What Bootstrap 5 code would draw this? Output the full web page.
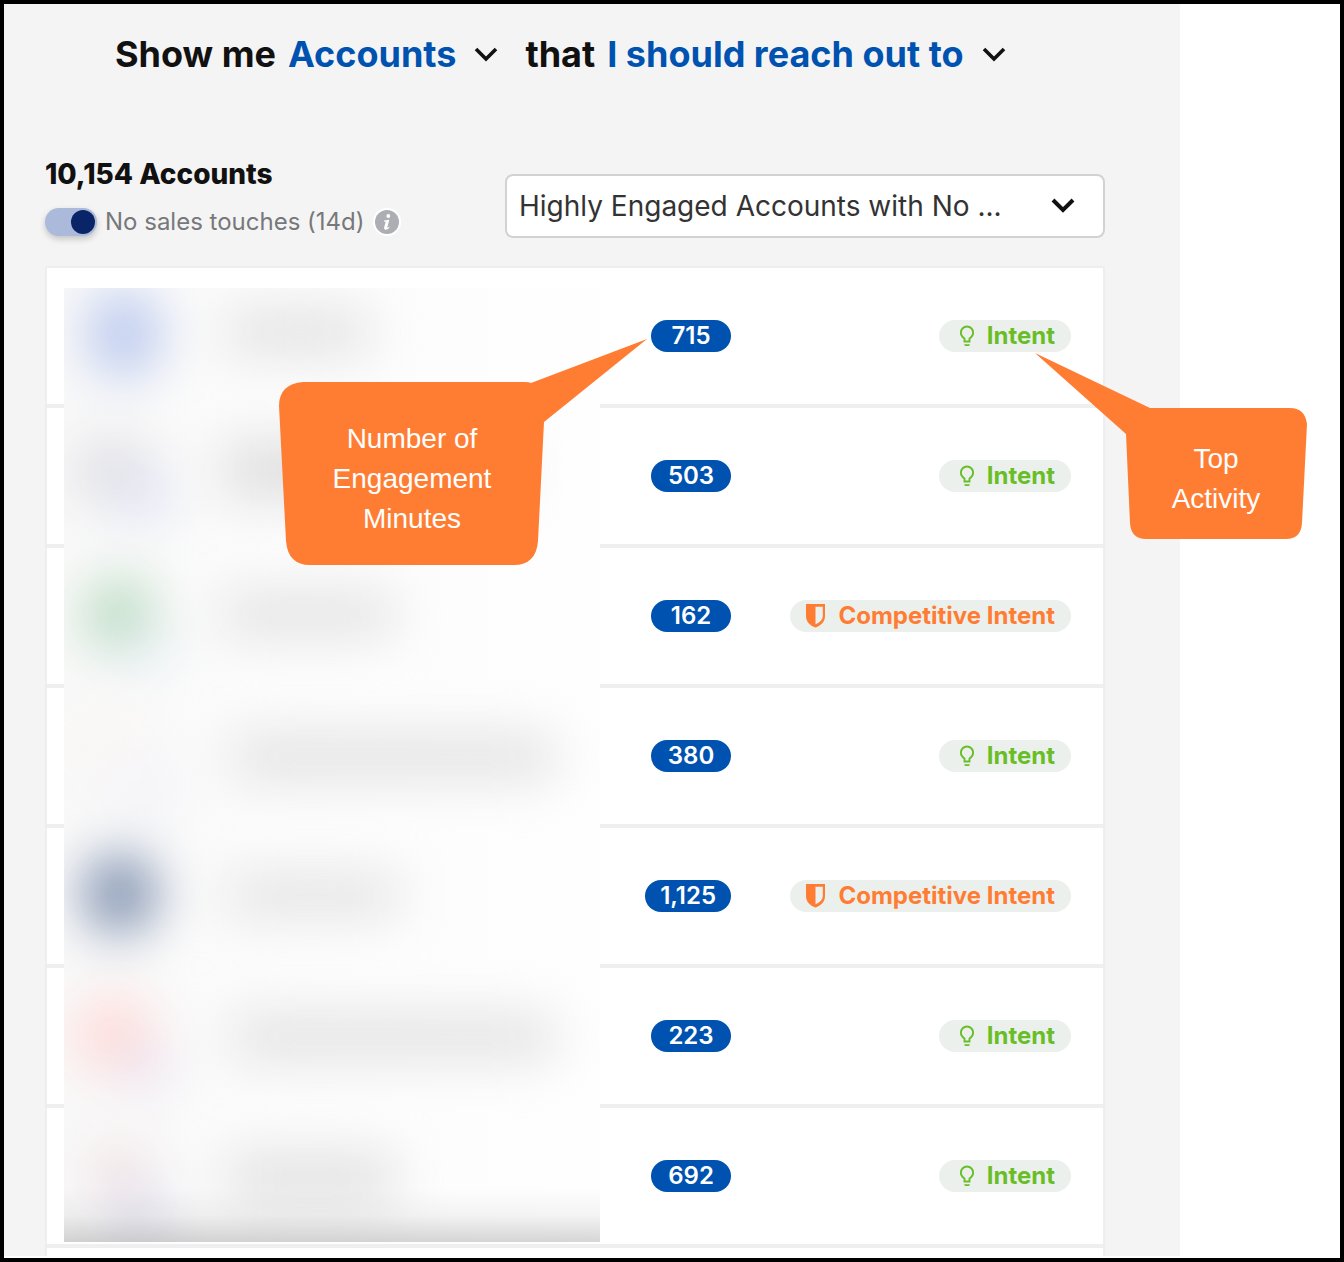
<!DOCTYPE html>
<html lang="en">
<head>
<meta charset="utf-8">
<meta name="viewport" content="width=device-width, initial-scale=1">
<title>Accounts</title>
<link href="https://cdn.jsdelivr.net/npm/bootstrap@5.3.0/dist/css/bootstrap.min.css" rel="stylesheet">
<style>
body { font-family: Inter, "Liberation Sans", sans-serif; background: #fff; color: #111; }
.frame { border: 4px solid #000; min-height: 100vh; padding: 0 160px 2px 0; }
.panel { background: #f4f4f4; padding: 24px 75px 0 41px; }
.query { font-size: 36px; line-height: 52px; font-weight: 700; padding-left: 70px; margin-bottom: 74px; }
.pick { background: none; border: 0; padding: 0; color: #0052b0; font-weight: 700; line-height: 52px; gap: 18px; margin: 0 27px 0 12px; }
.total { font-size: 28px; line-height: 40px; font-weight: 800; margin-bottom: 14px; }
.switch-input.form-check-input { width: 52px; height: 28px; margin: 0; border: 0; box-shadow: 0 3px 6px rgba(0,0,0,.2); background-color: #abb9da; background-size: 28px;
  background-image: url("data:image/svg+xml,%3Csvg xmlns='http://www.w3.org/2000/svg' viewBox='0 0 28 28'%3E%3Ccircle cx='14' cy='14' r='12' fill='%230a2567'/%3E%3C/svg%3E"); }
.tools-left { padding-bottom: 2px; }
.switch-label { font-size: 24px; line-height: 28px; color: #77787b; }
.segment.form-select { width: 600px; height: 64px; font-size: 28px; line-height: 40px; padding: 10px 64px 10px 12px; border: 2px solid #d2d2d2; border-radius: 8px; color: #333; background-position: right 26px center; background-size: 28px;
  background-image: url("data:image/svg+xml,%3Csvg xmlns='http://www.w3.org/2000/svg' viewBox='0 0 28 28'%3E%3Cpath d='M4 8l10 10L24 8' fill='none' stroke='%23111' stroke-width='4'/%3E%3C/svg%3E"); }
.accounts { border: 2px solid #eee; border-bottom: 0; background: #fff; margin-top: 28px; }
.account { height: 140px; border-bottom: 4px solid #efefef; padding-right: 32px; }
.account-next { height: 8px; }
.minutes { min-width: 80px; height: 32px; line-height: 32px; padding: 0 15px; font-size: 24px; font-weight: 600; color: #fff; background: #0052b0; text-align: center; }
.activity { width: 340px; }
.tag { height: 32px; line-height: 32px; padding: 0 16px; font-size: 24px; font-weight: 700; background: #ecf0ed; }
.tag-intent { color: #69be28; gap: 8px; }
.tag-rival { color: #ff7d32; gap: 12px; }
/* private names are hidden behind a heavy blur */
.redacted { left: 17px; top: 20px; width: 536px; height: 954px; background: #fcfcfc; }
.callout-note { color: #fff; font-family: "Liberation Sans", Arial, sans-serif; font-size: 28px; line-height: 40px; text-align: center; }
.note-minutes { left: 275px; top: 335px; width: 368px; padding: 80px 102px 0 0; height: 226px; }
.note-activity { left: 1031px; top: 349px; width: 272px; padding: 86px 0 0 90px; height: 186px; }
.callout-note svg { z-index: -1; }
</style>
</head>
<body>
<svg class="d-none">
  <symbol id="chev" viewBox="0 0 24 24"><path d="M2 7l10 10L22 7" fill="none" stroke="#111" stroke-width="3.6"/></symbol>
  <symbol id="bulb" viewBox="0 0 24 24"><path d="M9.500 17.500v-3C7 13 5.900 11.200 5.900 8.600a6.100 6.100 0 0 1 12.200 0c0 2.600-1.100 4.400-3.600 5.900v3z" fill="none" stroke="currentColor" stroke-width="1.900"/><path d="M9 20.200h6l-1 1.800h-4z" fill="currentColor"/></symbol>
  <symbol id="shield" viewBox="0 0 20 24"><path fill-rule="evenodd" d="M0 0h19v12c0 6-4 9.500-9.500 11.500C4 21.500 0 18 0 12zM9.500 2.800v17.500c4.500-2 7.300-4.500 7.300-8.500v-9z" fill="currentColor"/></symbol>
</svg>
<div class="frame position-relative">
  <main class="panel">
    <div class="query d-flex align-items-center">
      <span>Show me</span>
      <button type="button" class="pick d-flex align-items-center">Accounts <svg width="24" height="24" aria-hidden="true"><use href="#chev"/></svg></button>
      <span>that</span>
      <button type="button" class="pick d-flex align-items-center">I should reach out to <svg width="24" height="24" aria-hidden="true"><use href="#chev"/></svg></button>
    </div>
    <div class="d-flex justify-content-between align-items-end">
      <div class="tools-left">
        <h1 class="total">10,154 Accounts</h1>
        <div class="form-check form-switch d-flex align-items-center gap-2 p-0 m-0">
          <input class="form-check-input switch-input" type="checkbox" role="switch" id="untouched" checked>
          <label class="switch-label" for="untouched">No sales touches (14d)</label>
          <svg width="28" height="28" viewBox="0 0 28 28" aria-hidden="true"><circle cx="14" cy="14" r="14" fill="#fff"/><circle cx="14" cy="14" r="12" fill="#adaeb3"/><circle cx="15.300" cy="8" r="1.900" fill="#fff"/><path d="M11 12.500l5.300-.8-2 7.600q0 1 2-.5l.4.700q-2.500 2.600-4.400 2.300-1.700-.4-1.100-2.500l1.500-5.500-1.700-.3z" fill="#fff"/></svg>
        </div>
      </div>
      <select class="form-select segment" aria-label="Segment"><option>Highly Engaged Accounts with No ...</option></select>
    </div>
    <div class="accounts position-relative">
      <div class="account d-flex align-items-center justify-content-end"><span class="minutes rounded-pill">715</span><div class="activity d-flex justify-content-end"><span class="tag tag-intent rounded-pill d-flex align-items-center"><svg width="24" height="24"><use href="#bulb"/></svg>Intent</span></div></div>
      <div class="account d-flex align-items-center justify-content-end"><span class="minutes rounded-pill">503</span><div class="activity d-flex justify-content-end"><span class="tag tag-intent rounded-pill d-flex align-items-center"><svg width="24" height="24"><use href="#bulb"/></svg>Intent</span></div></div>
      <div class="account d-flex align-items-center justify-content-end"><span class="minutes rounded-pill">162</span><div class="activity d-flex justify-content-end"><span class="tag tag-rival rounded-pill d-flex align-items-center"><svg width="20" height="24"><use href="#shield"/></svg>Competitive Intent</span></div></div>
      <div class="account d-flex align-items-center justify-content-end"><span class="minutes rounded-pill">380</span><div class="activity d-flex justify-content-end"><span class="tag tag-intent rounded-pill d-flex align-items-center"><svg width="24" height="24"><use href="#bulb"/></svg>Intent</span></div></div>
      <div class="account d-flex align-items-center justify-content-end"><span class="minutes rounded-pill">1,125</span><div class="activity d-flex justify-content-end"><span class="tag tag-rival rounded-pill d-flex align-items-center"><svg width="20" height="24"><use href="#shield"/></svg>Competitive Intent</span></div></div>
      <div class="account d-flex align-items-center justify-content-end"><span class="minutes rounded-pill">223</span><div class="activity d-flex justify-content-end"><span class="tag tag-intent rounded-pill d-flex align-items-center"><svg width="24" height="24"><use href="#bulb"/></svg>Intent</span></div></div>
      <div class="account d-flex align-items-center justify-content-end"><span class="minutes rounded-pill">692</span><div class="activity d-flex justify-content-end"><span class="tag tag-intent rounded-pill d-flex align-items-center"><svg width="24" height="24"><use href="#bulb"/></svg>Intent</span></div></div>
      <div class="account-next"></div>
      <svg class="redacted position-absolute" viewBox="0 0 536 954" aria-hidden="true">
        <defs>
          <filter id="soft" x="-50%" y="-50%" width="200%" height="200%" color-interpolation-filters="sRGB"><feGaussianBlur stdDeviation="26"/></filter>
          <linearGradient id="foot" x2="0" y2="1"><stop offset="0" stop-color="#000" stop-opacity="0"/><stop offset=".5" stop-color="#000" stop-opacity=".04"/><stop offset="1" stop-color="#000" stop-opacity=".16"/></linearGradient>
          <linearGradient id="side"><stop offset="0" stop-color="#f9f9f9"/><stop offset=".4" stop-color="#fcfcfc"/><stop offset="1" stop-color="#fefefe"/></linearGradient>
        </defs>
        <rect width="536" height="954" fill="url(#side)"/>
        <g filter="url(#soft)">
          <ellipse cx="60" cy="46" rx="38" ry="44" fill="#bccaee"/>
          <ellipse cx="50" cy="184" rx="42" ry="34" fill="#dfdfe4"/><ellipse cx="80" cy="208" rx="28" ry="26" fill="#e0e3f5"/>
          <ellipse cx="56" cy="328" rx="36" ry="38" fill="#b8dabf"/><ellipse cx="80" cy="358" rx="24" ry="24" fill="#e2ecf2"/>
          <ellipse cx="46" cy="455" rx="34" ry="30" fill="#fbf6f3"/><ellipse cx="80" cy="500" rx="34" ry="30" fill="#f2f2f9"/>
          <ellipse cx="56" cy="606" rx="38" ry="40" fill="#8192b0"/>
          <ellipse cx="50" cy="748" rx="40" ry="40" fill="#ffdbd8"/><ellipse cx="80" cy="778" rx="26" ry="24" fill="#e9e0ef"/>
          <ellipse cx="56" cy="888" rx="34" ry="34" fill="#f1e3e4"/><ellipse cx="76" cy="924" rx="30" ry="28" fill="#e0e1f0"/>
          <g fill="#dedede">
            <rect x="165" y="25" width="140" height="38"/>
            <rect x="160" y="154" width="290" height="56"/>
            <rect x="160" y="308" width="170" height="36"/>
            <rect x="170" y="450" width="320" height="38"/>
            <rect x="165" y="590" width="170" height="34"/>
            <rect x="170" y="730" width="320" height="38"/>
            <rect x="165" y="868" width="165" height="44"/>
          </g>
        </g>
        <rect y="900" width="536" height="54" fill="url(#foot)"/>
      </svg>
    </div>
  </main>

  <div class="callout-note note-minutes position-absolute z-1">
    <svg class="position-absolute top-0 start-0" width="368" height="226" aria-hidden="true"><path d="M24 43H246Q250 43 252 44L368 0L265 83L259 202Q257 226 235 226H31Q9 226 7 202L0 67Q0 45 24 43z" fill="#ff7d33"/></svg>
    Number of<br>Engagement<br>Minutes
  </div>
  <div class="callout-note note-activity position-absolute z-1">
    <svg class="position-absolute top-0 start-0" width="272" height="186" aria-hidden="true"><path d="M0 0L115 55H255Q270 55 272 71L267 170Q266 186 251 186H111Q96 186 95 170L91 81z" fill="#ff7d33"/></svg>
    Top<br>Activity
  </div>
</div>
<script src="https://cdn.jsdelivr.net/npm/bootstrap@5.3.0/dist/js/bootstrap.bundle.min.js"></script>
</body>
</html>
